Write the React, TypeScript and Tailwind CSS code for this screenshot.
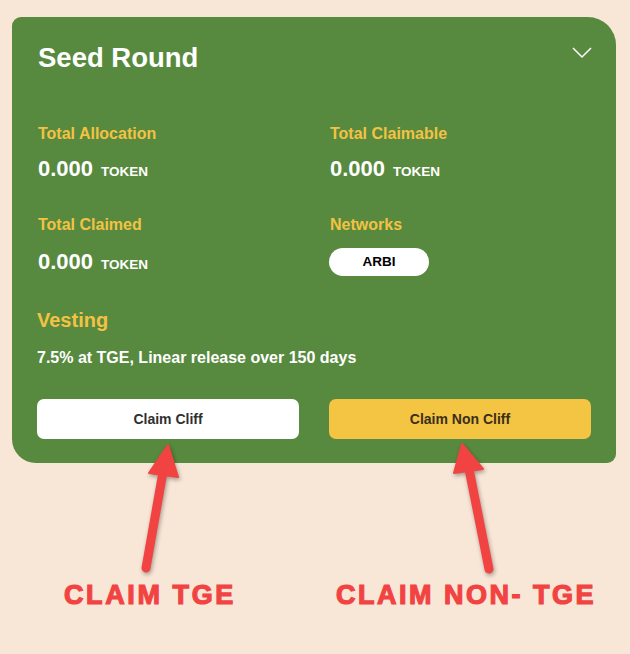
type Stat = { label: string; value: string };

const stats: Stat[] = [
    { label: 'Total Allocation', value: '0.000' },
    { label: 'Total Claimable', value: '0.000' },
];

// Flecha roja de anotación (encima del contenido)
const Arrow = ({ tail, base, tip, left, right }: {
    tail: [number, number];
    base: [number, number];
    tip: [number, number];
    left: [number, number];
    right: [number, number];
}) => (
    <g>
        <line x1={tail[0]} y1={tail[1]} x2={base[0]} y2={base[1]} stroke="#f24343" strokeWidth={9} strokeLinecap="round" />
        <polygon points={`${tip[0]},${tip[1]} ${left[0]},${left[1]} ${right[0]},${right[1]}`} fill="#f24343" strokeLinejoin="round" stroke="#f24343" strokeWidth={2} />
    </g>
);

const Value = ({ value }: { value: string }) => (
    <div className="flex items-baseline h-[28px] leading-[28px]">
        <span className="text-[22px] font-bold text-white">{value}</span>
        <span className="ml-[8px] text-[13.5px] font-bold text-white">TOKEN</span>
    </div>
);

export default function App() {
    return (
        <div className="relative min-h-screen bg-[#f8e7d7] pt-[17px] px-[12px] [font-family:'Liberation_Sans',Arial,sans-serif]">
            {/* Tarjeta */}
            <div className="w-[604px] bg-[#578a3e] rounded-tl-[9px] rounded-tr-[28px] rounded-bl-[24px] rounded-br-[9px] pt-[25px] pb-[24px] px-[25px]">
                <div className="flex justify-between items-start">
                    <h2 className="text-[27.5px] leading-[32px] font-bold text-white ml-[1px]">Seed Round</h2>
                    <svg className="mt-[5px] -mr-[1px]" width={20} height={12} viewBox="0 0 20 12" fill="none">
                        <polyline points="1,1 10,10 19,1" stroke="white" strokeWidth={1.5} />
                    </svg>
                </div>

                <div className="grid grid-cols-2 gap-x-[30px] mt-[50px]">
                    {stats.map((s) => (
                        <div key={s.label} className="pl-[1px]">
                            <p className="text-[16px] leading-[20px] font-bold text-[#f3c244]">{s.label}</p>
                            <div className="mt-[11px]"><Value value={s.value} /></div>
                        </div>
                    ))}
                </div>

                <div className="grid grid-cols-2 gap-x-[30px] mt-[32px]">
                    <div className="pl-[1px]">
                        <p className="text-[16px] leading-[20px] font-bold text-[#f3c244]">Total Claimed</p>
                        <div className="mt-[13px]"><Value value="0.000" /></div>
                    </div>
                    <div>
                        <p className="pl-[1px] text-[16px] leading-[20px] font-bold text-[#f3c244]">Networks</p>
                        <div className="mt-[13px] w-[100px] h-[28px] rounded-full bg-white flex items-center justify-center text-[13.5px] font-bold text-black">
                            ARBI
                        </div>
                    </div>
                </div>

                <p className="mt-[32px] text-[20px] leading-[24px] font-bold text-[#f3c244]">Vesting</p>
                <p className="mt-[16px] text-[16px] leading-[20px] font-bold text-white">7.5% at TGE, Linear release over 150 days</p>

                <div className="grid grid-cols-2 gap-x-[30px] mt-[31px]">
                    <button className="h-[40px] rounded-[7px] bg-white text-[14px] font-bold text-[#2f2f2f]">Claim Cliff</button>
                    <button className="h-[40px] rounded-[7px] bg-[#f4c443] text-[14px] font-bold text-[#3a2f1a]">Claim Non Cliff</button>
                </div>
            </div>

            {/* Etiquetas */}
            <div className="grid grid-cols-[272px_1fr] pl-[52px] mt-[116px]">
                <span className="text-[27px] leading-[32px] font-bold tracking-[2.6px] text-[#f24343] [-webkit-text-stroke:1.2px_#f24343]">CLAIM TGE</span>
                <span className="text-[27px] leading-[32px] font-bold tracking-[2.5px] text-[#f24343] [-webkit-text-stroke:1.2px_#f24343]">CLAIM NON- TGE</span>
            </div>

            {/* Flechas */}
            <svg className="absolute left-0 top-0 pointer-events-none drop-shadow-[1px_2px_2px_rgba(0,0,0,0.35)]" width={630} height={654}>
                <Arrow tail={[146, 568]} base={[163, 472]} tip={[168, 445]} left={[149, 473]} right={[178, 477]} />
                <Arrow tail={[489, 569]} base={[469, 469]} tip={[462, 444]} left={[454, 473]} right={[483, 469]} />
            </svg>
        </div>
    );
}
